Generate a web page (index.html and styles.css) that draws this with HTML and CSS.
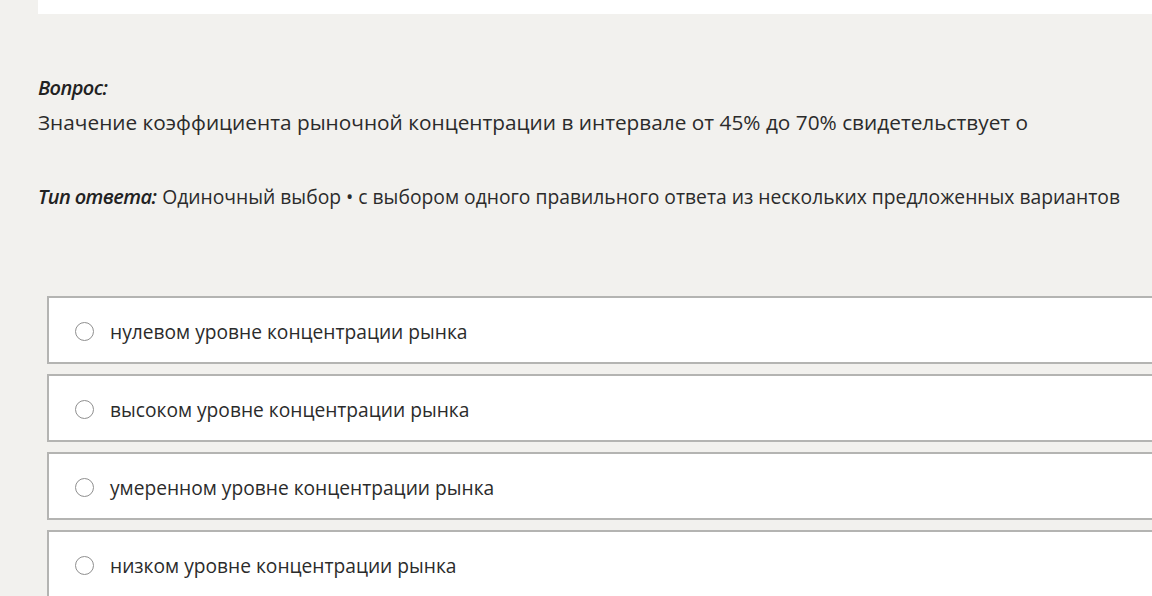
FILE: index.html
```html
<!DOCTYPE html>
<html lang="ru">
  <head>
    <meta charset="UTF-8" />
    <meta name="viewport" content="width=device-width, initial-scale=1.0" />
    <title>Вопрос</title>
    <link rel="stylesheet" href="styles.css">
  </head>
  <body>
    <div class="top-panel"></div>

    <div class="question">
      <div class="label">Вопрос:</div>
      <p class="question-text">
        Значение коэффициента рыночной концентрации в интервале от 45% до 70% свидетельствует о
      </p>
      <p class="answer-type">
        <span class="label">Тип ответа:</span> Одиночный выбор • с выбором одного правильного ответа из нескольких предложенных вариантов
      </p>
    </div>

    <ul class="options">
      <li>
        <label class="option">
          <span class="radio"></span>
          нулевом уровне концентрации рынка
        </label>
      </li>
      <li>
        <label class="option">
          <span class="radio"></span>
          высоком уровне концентрации рынка
        </label>
      </li>
      <li>
        <label class="option">
          <span class="radio"></span>
          умеренном уровне концентрации рынка
        </label>
      </li>
      <li>
        <label class="option">
          <span class="radio"></span>
          низком уровне концентрации рынка
        </label>
      </li>
    </ul>
  </body>
</html>
```

FILE: styles.css
```css
body {
  font-family: "Open Sans", "Noto Sans", sans-serif;
  background-color: #f2f1ee;
  color: #2b2b2b;
  margin: 0;
  padding: 0;
  overflow: hidden;
}

.top-panel {
  margin-left: 38px;
  height: 14px;
  background-color: white;
}

.question {
  padding: 60px 0 0 38px;
  white-space: nowrap;
}

.label {
  font-style: italic;
  font-weight: 600;
  letter-spacing: -0.6px;
  color: #222;
}

.question .label {
  font-size: 20px;
  line-height: 28px;
}

.question-text {
  margin: 6px 0 0 0;
  font-size: 20.8px;
  line-height: 28px;
}

.answer-type {
  margin: 47px 0 0 0;
  font-size: 19.3px;
  line-height: 28px;
}

.answer-type .label {
  display: inline;
  font-size: 20px;
  margin-right: 1px;
}

ul {
  list-style: none;
  padding: 0;
  margin: 85px 0 0 47px;
}

.options li {
  margin-bottom: 10px;
}

.option {
  display: flex;
  align-items: center;
  box-sizing: border-box;
  height: 68px;
  padding-top: 3px;
  background-color: white;
  border: 2px solid #b4b4b2;
  border-right: none;
  padding-left: 26px;
  font-size: 19.2px;
  color: #2b2b2b;
  cursor: pointer;
}

.radio {
  width: 17px;
  height: 17px;
  border: 1.5px solid #8f8f8f;
  border-radius: 50%;
  margin-right: 16px;
  flex-shrink: 0;
}
```
